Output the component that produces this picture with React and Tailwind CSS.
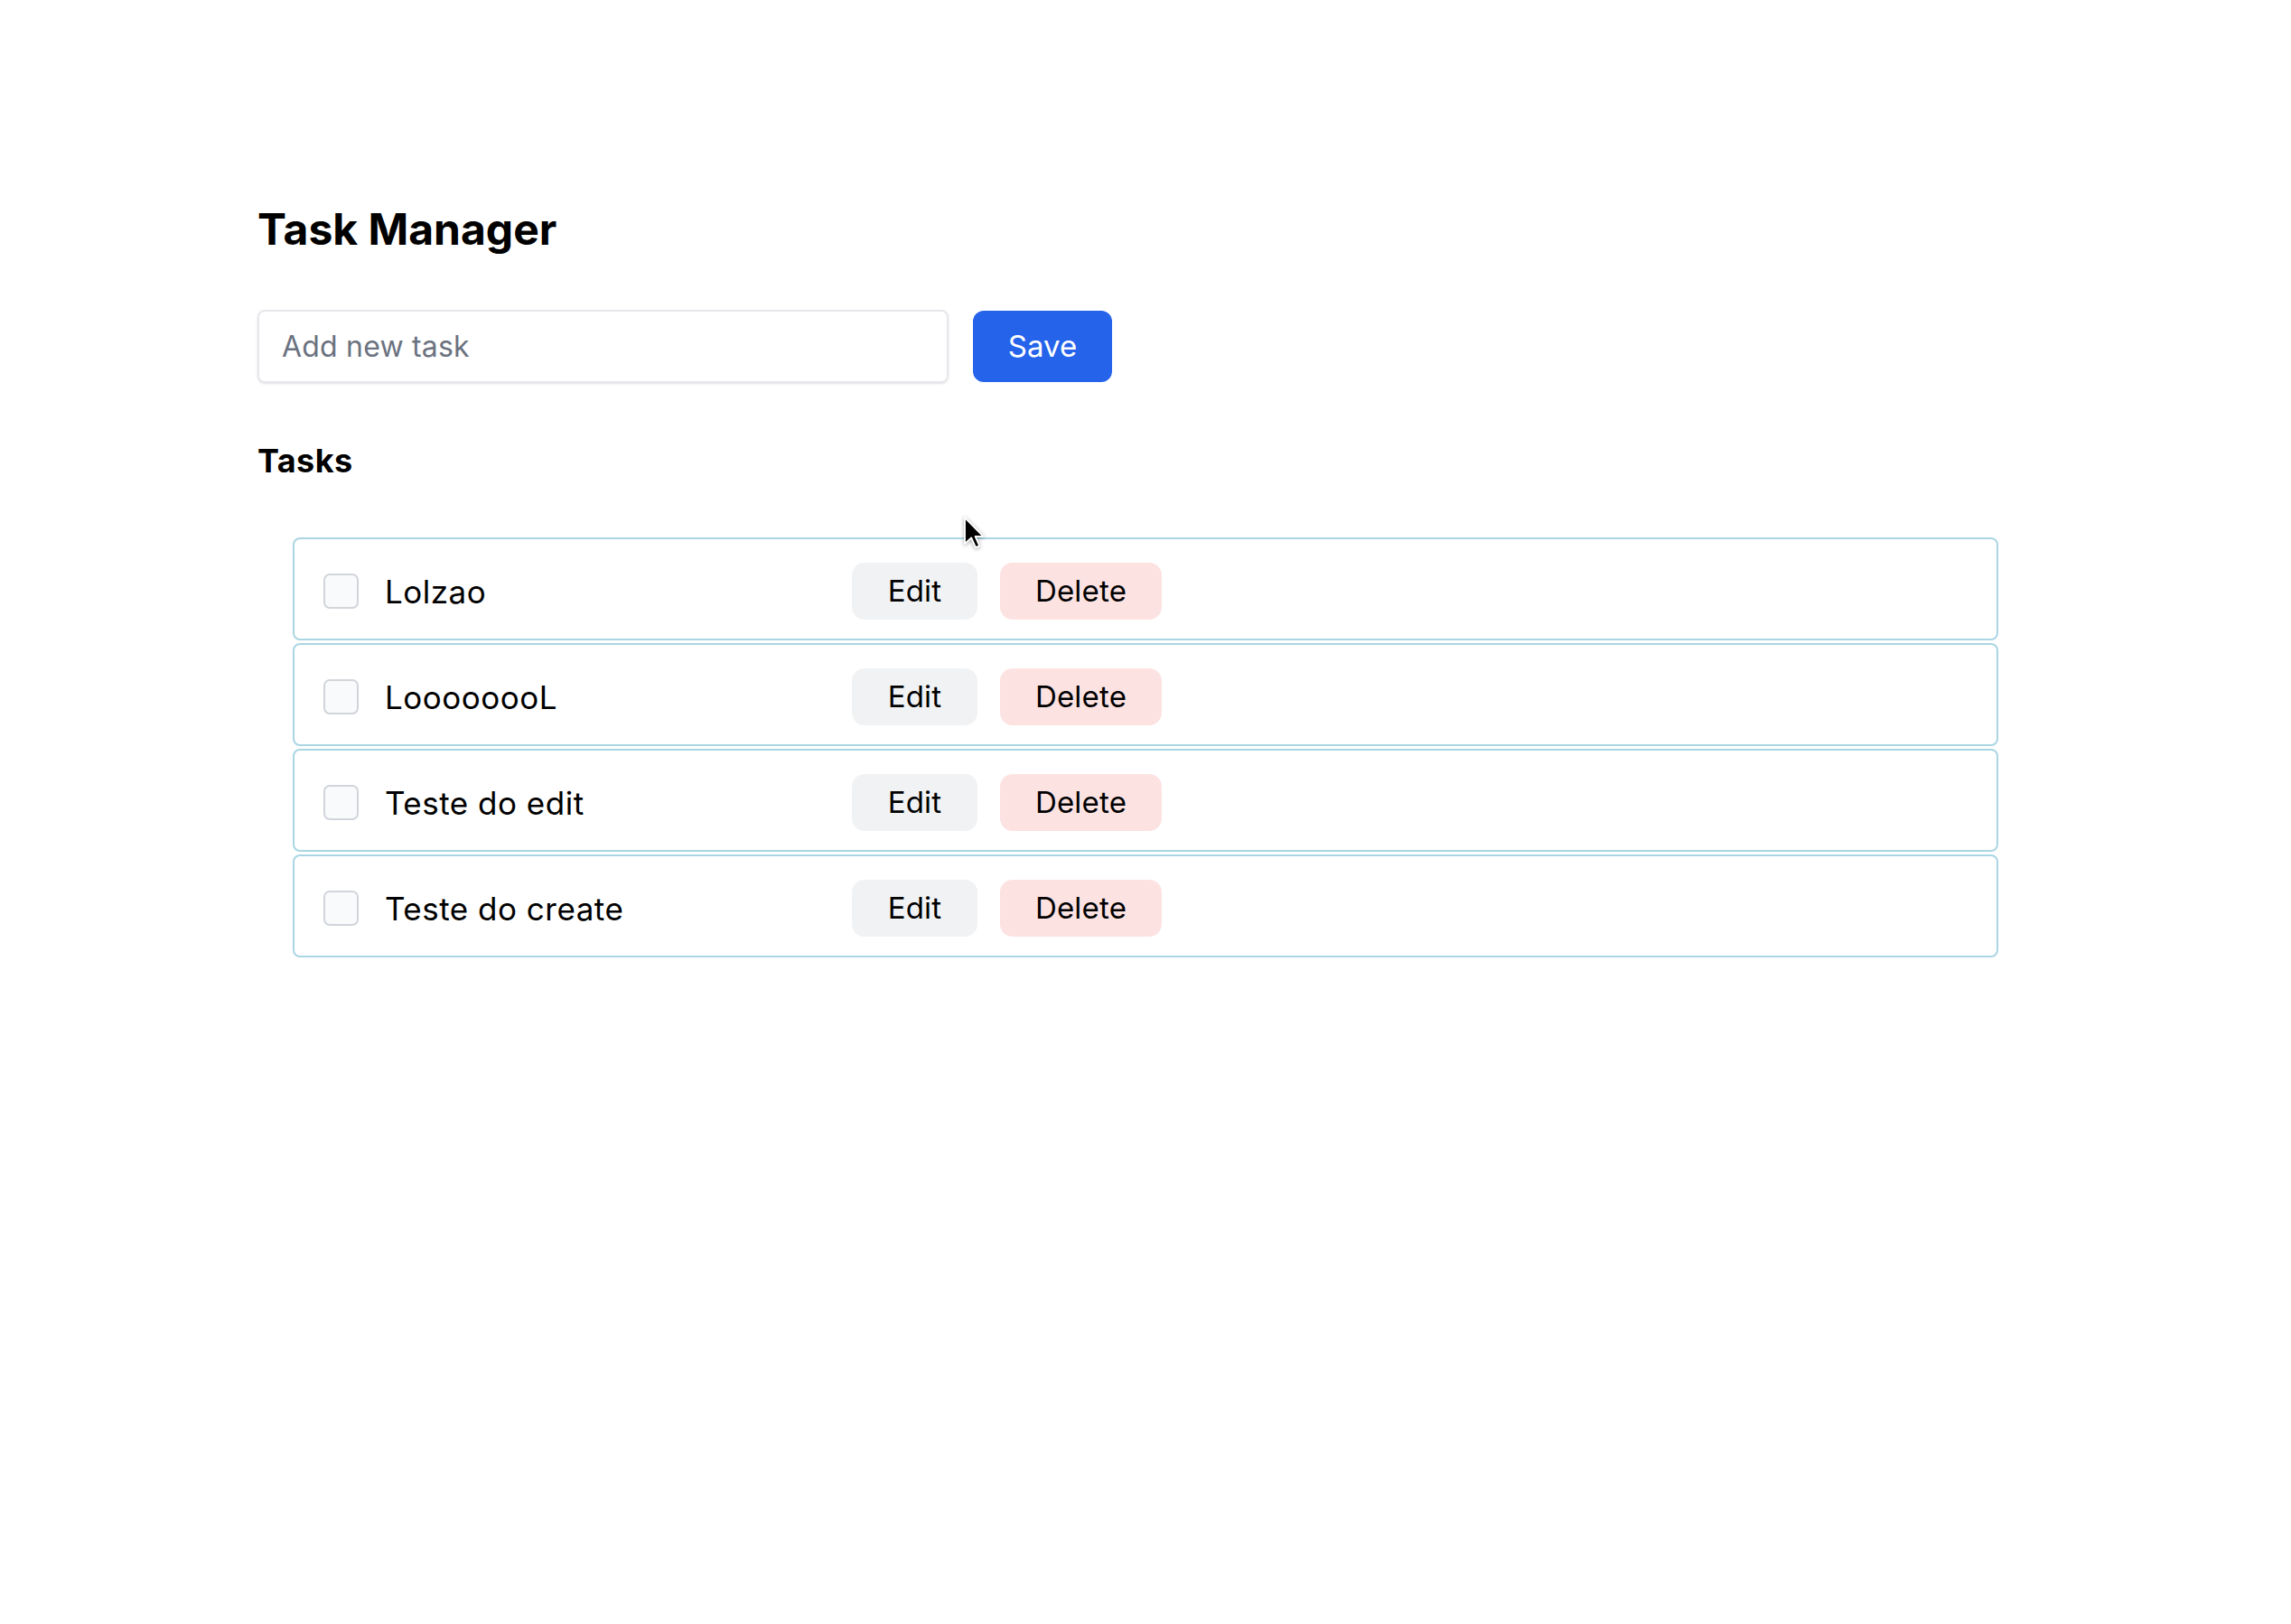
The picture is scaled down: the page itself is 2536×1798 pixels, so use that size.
import { useState } from "react";

const initialTasks = [
  { id: 1, title: "Lolzao", done: false },
  { id: 2, title: "LoooooooL", done: false },
  { id: 3, title: "Teste do edit", done: false },
  { id: 4, title: "Teste do create", done: false },
];

function Cursor() {
  return (
    <svg
      className="absolute left-[1066px] top-[571px] drop-shadow-[0_1px_2px_rgba(0,0,0,0.35)]"
      width="24"
      height="38"
      viewBox="0 0 12 19"
    >
      <path
        d="M1 1 L1 15.5 L4.6 12.2 L7 17.6 L9.1 16.7 L6.8 11.4 L11.2 11.4 Z"
        fill="#000"
        stroke="#fff"
        strokeWidth="0.9"
        strokeLinejoin="round"
      />
    </svg>
  );
}

export default function App() {
  const [tasks, setTasks] = useState(initialTasks);
  const [newTask, setNewTask] = useState("");

  const addTask = () => {
    if (!newTask.trim()) return;
    setTasks([...tasks, { id: Date.now(), title: newTask.trim(), done: false }]);
    setNewTask("");
  };

  const toggleTask = (id) => {
    setTasks(tasks.map((t) => (t.id === id ? { ...t, done: !t.done } : t)));
  };

  const deleteTask = (id) => {
    setTasks(tasks.filter((t) => t.id !== id));
  };

  return (
    <div className="relative min-h-screen bg-white text-black font-['Inter','Noto_Sans',sans-serif]">
      <div className="pl-[285px] pt-[223px] pb-[200px]">
        <h1 className="text-[48px] leading-[62px] font-bold">Task Manager</h1>

        <div className="mt-[58px] flex items-center gap-[27px]">
          <input
            type="text"
            value={newTask}
            onChange={(e) => setNewTask(e.target.value)}
            placeholder="Add new task"
            className="w-[765px] h-[81px] px-[25px] text-[32px] tracking-[0.2px] border-2 border-[#e5e7eb] rounded-[8px] shadow-sm outline-none placeholder:text-[#6b7280]"
          />
          <button
            onClick={addTask}
            className="w-[154px] h-[79px] rounded-[12px] bg-[#2563eb] text-white text-[33px]"
          >
            Save
          </button>
        </div>

        <h2 className="mt-[62px] text-[36px] leading-[49px] font-bold tracking-[0.4px]">Tasks</h2>

        <ul className="mt-[60px] ml-[39px] w-[1888px] flex flex-col gap-[3px]">
          {tasks.map((task) => (
            <li
              key={task.id}
              className="h-[114px] flex items-center pl-[32px] pt-[5px] border-2 border-[#aad6e3] rounded-[8px]"
            >
              <input
                type="checkbox"
                checked={task.done}
                onChange={() => toggleTask(task.id)}
                className="appearance-none w-[39px] h-[39px] shrink-0 rounded-[7px] border-2 border-[#d1d5db] bg-[#f9fafb] checked:bg-[#2563eb]"
              />
              <span className="ml-[29px] w-[517px] text-[35px] leading-[46px] tracking-[0.5px]">
                {task.title}
              </span>
              <button className="w-[139px] h-[63px] rounded-[14px] bg-[#f0f2f4] text-[33px] tracking-[0.2px]">
                Edit
              </button>
              <button
                onClick={() => deleteTask(task.id)}
                className="ml-[25px] w-[179px] h-[63px] rounded-[14px] bg-[#fde2e2] text-[33px] tracking-[0.2px]"
              >
                Delete
              </button>
            </li>
          ))}
        </ul>
      </div>
      <Cursor />
    </div>
  );
}
